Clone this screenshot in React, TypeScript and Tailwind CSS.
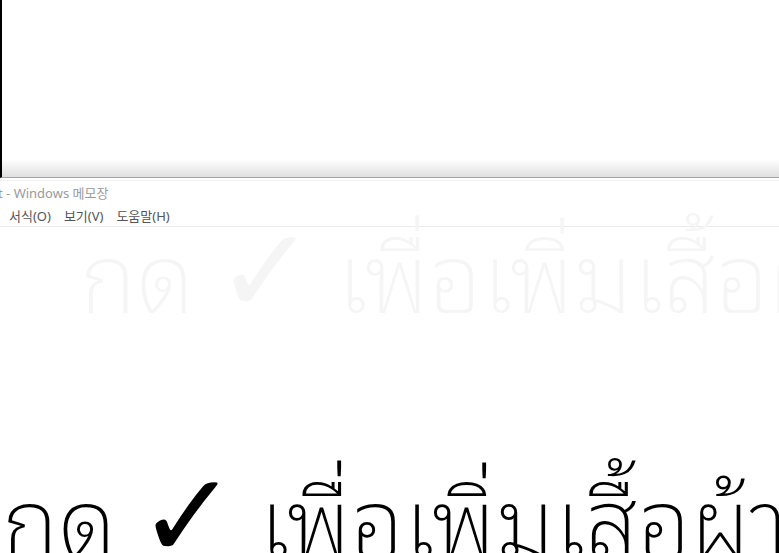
import React from "react";

const thai = '"Noto Sans Thai Looped", "Leelawadee UI", "Noto Sans Thai", "Noto Sans", "DejaVu Sans", sans-serif';

function Line() {
  return (
    <>
      กด <span className="inline-block text-[120px] font-bold leading-none -mx-[4px]">✓</span> เพื่อเพิ่มเสื้อผ้า
    </>
  );
}

export default function App() {
  return (
    <div className="relative w-[779px] h-[553px] overflow-hidden bg-white" style={{ fontFamily: '"Noto Sans", "Noto Sans CJK KR", sans-serif' }}>
      {/* top window */}
      <div className="h-[178px] border-l-2 border-black border-b border-b-[#a6a6a6] bg-gradient-to-b from-white from-[90%] to-[#e0e0e0]" />
      <div className="h-[2px] bg-white" />
      <div className="h-px bg-[#efefef]" />
      {/* title */}
      <div className="h-[25px] flex items-center text-[13px] text-[#9a9a9a] leading-none">
        <span className="-ml-[2px]">t - Windows 메모장</span>
      </div>
      {/* menu */}
      <div className="h-[21px] flex items-center gap-[13px] pl-[9px] text-[13px] text-[#555] leading-none border-b border-[#ebebeb]">
        <span>서식(O)</span>
        <span>보기(V)</span>
        <span>도움말(H)</span>
      </div>
      {/* ghost reflection */}
      <div
        className="absolute left-[80px] top-[199px] whitespace-nowrap text-[96px] font-extralight leading-none text-[#f5f5f5] pointer-events-none"
        style={{ fontFamily: thai }}
      >
        <Line />
      </div>
      {/* big text */}
      <div
        className="absolute left-[2px] top-[444px] whitespace-nowrap text-[96px] font-extralight leading-none text-black"
        style={{ fontFamily: thai }}
      >
        <Line />
      </div>
    </div>
  );
}
